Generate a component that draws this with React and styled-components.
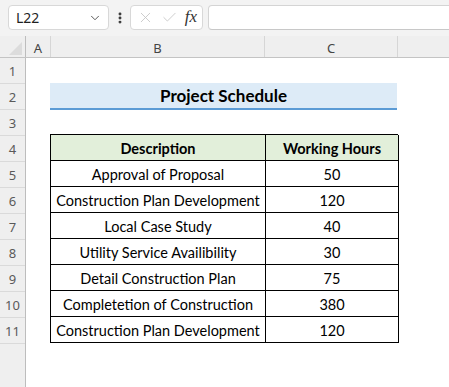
import React from 'react';
import styled, { createGlobalStyle } from 'styled-components';
import { ChevronDown, EllipsisVertical, X, Check } from 'lucide-react';

const GlobalStyle = createGlobalStyle`
  html, body {
    margin: 0;
    padding: 0;
    background: #ffffff;
    overflow: hidden;
  }
  * {
    box-sizing: border-box;
  }
`;

const Page = styled.div`
  width: 449px;
  height: 387px;
  display: flex;
  flex-direction: column;
  background: #ffffff;
  overflow: hidden;
  font-family: "Noto Sans", "Open Sans", sans-serif;
`;

const TopBar = styled.div`
  height: 36px;
  flex: none;
  display: flex;
  align-items: flex-start;
  padding: 5px 0 0 8px;
  background: #f3f3f3;
`;

const NameBox = styled.div`
  width: 101px;
  height: 25px;
  display: flex;
  align-items: center;
  justify-content: space-between;
  padding: 0 6px 0 7px;
  background: #ffffff;
  border: 1px solid #d8d8d8;
  border-radius: 4px;
  font-size: 14px;
  color: #1f1f1f;
`;

const Dots = styled.div`
  width: 21px;
  height: 25px;
  display: flex;
  align-items: center;
  justify-content: center;
  color: #333333;
`;

const FormulaButtons = styled.div`
  width: 73px;
  height: 25px;
  display: flex;
  align-items: center;
  justify-content: space-between;
  padding: 0 5px 0 6px;
  background: #ffffff;
  border: 1px solid #d8d8d8;
  border-radius: 4px;
  color: #c4c4c4;
`;

const Fx = styled.span`
  font-family: "Liberation Serif", serif;
  font-style: italic;
  font-size: 17px;
  color: #333333;
  line-height: 1;
  padding-bottom: 2px;
`;

const FormulaInput = styled.div`
  flex: 1;
  height: 25px;
  margin-left: 5px;
  margin-right: -6px;
  background: #ffffff;
  border: 1px solid #d4d4d4;
  border-bottom-color: #c8c8c8;
  border-radius: 4px;
`;

const ColumnHeaderRow = styled.div`
  height: 22px;
  flex: none;
  display: flex;
  background: #efefef;
  border-bottom: 1px solid #c4c4c4;
`;

const HeaderCell = styled.div`
  width: ${p => p.w ? `${p.w}px` : 'auto'};
  flex: ${p => p.w ? 'none' : '1'};
  position: relative;
  display: flex;
  align-items: center;
  justify-content: center;
  padding-top: 2px;
  font-size: 13px;
  color: #444444;
  border-right: ${p => p.corner ? '1px solid #bdbdbd' : p.w ? '1px solid #d6d6d6' : 'none'};
`;

const CornerTriangle = styled.div`
  position: absolute;
  right: 3px;
  bottom: 2px;
  width: 0;
  height: 0;
  border-left: 13px solid transparent;
  border-bottom: 13px solid #dcdcdc;
`;

const Body = styled.div`
  flex: 1;
  display: flex;
`;

const RowHeaders = styled.div`
  width: 26px;
  flex: none;
  background: #efefef;
  border-right: 1px solid #bdbdbd;
`;

const RowNumber = styled.div`
  height: 26px;
  display: flex;
  align-items: center;
  justify-content: center;
  padding-top: 1px;
  font-size: 13px;
  color: #5a5a5a;
  border-bottom: 1px solid #dadada;
`;

const SheetArea = styled.div`
  flex: 1;
  display: flex;
  flex-direction: column;
  padding-left: 24px;
  font-family: "Lato", "Open Sans", sans-serif;
  color: #000000;
`;

const Spacer = styled.div`
  height: ${p => p.h}px;
  flex: none;
`;

const TitleBar = styled.div`
  width: 347px;
  height: 27px;
  flex: none;
  display: flex;
  align-items: center;
  justify-content: center;
  background: #ddebf7;
  border-bottom: 2px solid #5b9bd5;
  font-weight: 700;
  font-size: 17px;
`;

const Table = styled.div`
  width: 348px;
  display: grid;
  grid-template-columns: 215px 133px;
  grid-auto-rows: 26px;
  border-top: 1px solid #000000;
  border-left: 1px solid #000000;
`;

const Cell = styled.div`
  display: flex;
  align-items: center;
  justify-content: center;
  padding-top: 1px;
  border-right: 1px solid #000000;
  border-bottom: 1px solid #000000;
  background: ${p => p.head ? '#e2efda' : '#ffffff'};
  font-weight: ${p => p.head ? 700 : 400};
  font-size: 14.5px;
  white-space: nowrap;
`;

const rows = [
  ['Approval of Proposal', 50],
  ['Construction Plan Development', 120],
  ['Local Case Study', 40],
  ['Utility Service Availibility', 30],
  ['Detail Construction Plan', 75],
  ['Completetion of Construction', 380],
  ['Construction Plan Development', 120],
];

export default function App() {
  return (
    <Page>
      <GlobalStyle />
      <TopBar>
        <NameBox>
          <span>L22</span>
          <ChevronDown size={14} strokeWidth={1.5} color="#444" />
        </NameBox>
        <Dots>
          <EllipsisVertical size={14} strokeWidth={3} />
        </Dots>
        <FormulaButtons>
          <X size={17} strokeWidth={1.2} />
          <Check size={17} strokeWidth={1.2} />
          <Fx>fx</Fx>
        </FormulaButtons>
        <FormulaInput />
      </TopBar>
      <ColumnHeaderRow>
        <HeaderCell w={26} corner>
          <CornerTriangle />
        </HeaderCell>
        <HeaderCell w={25}>A</HeaderCell>
        <HeaderCell w={214}>B</HeaderCell>
        <HeaderCell w={133}>C</HeaderCell>
        <HeaderCell />
      </ColumnHeaderRow>
      <Body>
        <RowHeaders>
          {Array.from({ length: 11 }, (_, i) => (
            <RowNumber key={i}>{i + 1}</RowNumber>
          ))}
        </RowHeaders>
        <SheetArea>
          <Spacer h={25} />
          <TitleBar>Project Schedule</TitleBar>
          <Spacer h={24} />
          <Table>
            <Cell head>Description</Cell>
            <Cell head>Working Hours</Cell>
            {rows.map(([desc, hours], i) => (
              <React.Fragment key={i}>
                <Cell>{desc}</Cell>
                <Cell>{hours}</Cell>
              </React.Fragment>
            ))}
          </Table>
        </SheetArea>
      </Body>
    </Page>
  );
}
